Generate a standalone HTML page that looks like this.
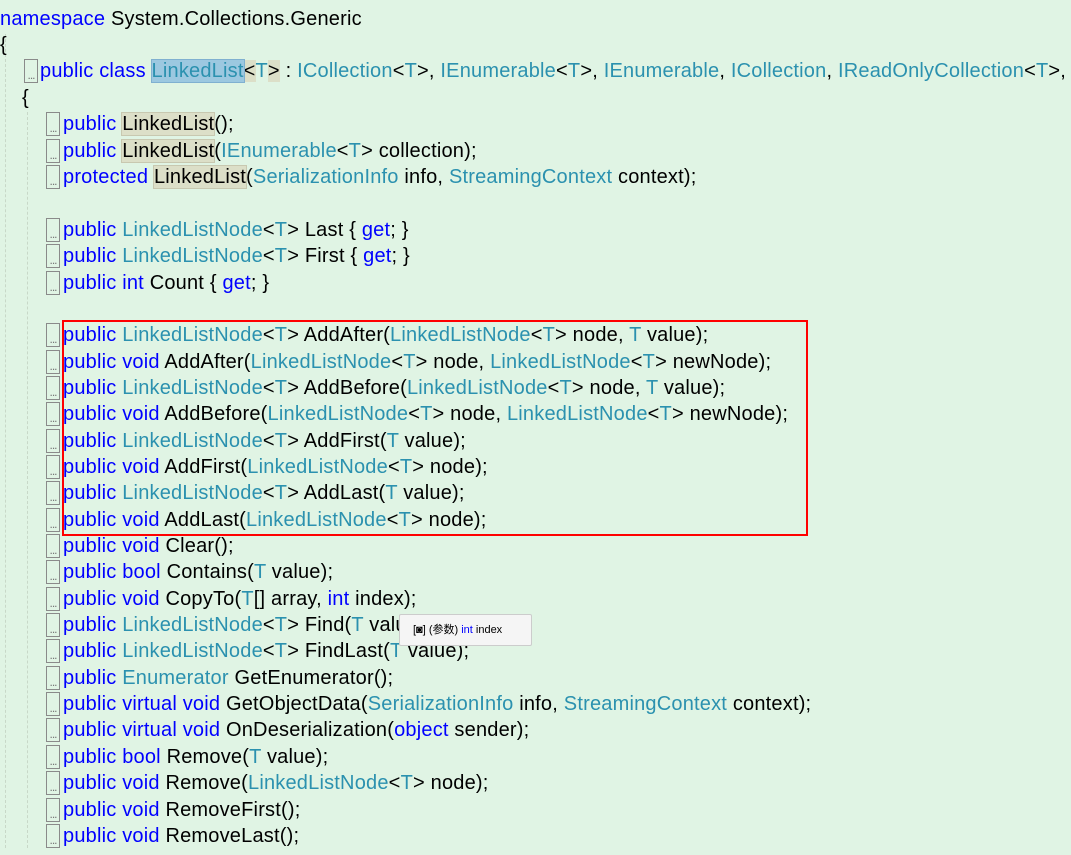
<!DOCTYPE html><html><head><meta charset="utf-8"><style>
body{margin:0;width:1071px;height:848px;background:#e0f4e4;overflow:hidden;position:relative;font-family:"Liberation Sans","Noto Sans CJK SC",sans-serif;font-size:20px;letter-spacing:0.2px;color:#000}
.l{position:absolute;height:26px;line-height:26px;white-space:nowrap}
.k{color:#0000ff}.t{color:#2b91af}
.b{position:absolute;width:14px;height:24px;border:1px solid #8a8a8a;box-sizing:border-box;color:#777;font-size:12px;line-height:30px;text-align:center;letter-spacing:-1px}
.g{position:absolute;border-left:1px dashed #c8d8c8;width:0}
.h{background:#dcdfc8;outline:1px solid #c8c8b0}
</style></head><body>
<div class="g" style="left:5px;top:34px;height:814px"></div>
<div class="g" style="left:27px;top:112px;height:736px"></div>
<div class="l" style="left:0;top:6px"><span class="k">namespace</span> System.Collections.Generic</div>
<div class="l" style="left:0;top:32px">{</div>
<div class="b" style="left:24px;top:59px">...</div>
<div class="l" style="left:40px;top:58px"><span class="k">public class</span> <span class="t" style="background:#9cc8e0;outline:1px solid #80b0d0">LinkedList</span><span style="background:#dcdfc8">&lt;</span><span class="t">T</span><span style="background:#dcdfc8">&gt;</span> : <span class="t">ICollection</span>&lt;<span class="t">T</span>&gt;, <span class="t">IEnumerable</span>&lt;<span class="t">T</span>&gt;, <span class="t">IEnumerable</span>, <span class="t">ICollection</span>, <span class="t">IReadOnlyCollection</span>&lt;<span class="t">T</span>&gt;,</div>
<div class="l" style="left:22px;top:85px">{</div>
<div id="c"></div>
<div style="position:absolute;left:62px;top:320px;width:746px;height:216px;border:2px solid #f00;box-sizing:border-box"></div>
<div style="position:absolute;left:399px;top:614px;width:133px;height:32px;background:#f5f5f5;border:1px solid #ccc;border-radius:2px;box-sizing:border-box;font-size:11px;letter-spacing:0;line-height:30px;padding-left:13px">[◙] (参数) <span class="k">int</span> index</div>
<script>
var L={4:'<span class="k">public</span> <span class="h">LinkedList</span>();',
5:'<span class="k">public</span> <span class="h">LinkedList</span>(<span class="t">IEnumerable</span>&lt;<span class="t">T</span>&gt; collection);',
6:'<span class="k">protected</span> <span class="h">LinkedList</span>(<span class="t">SerializationInfo</span> info, <span class="t">StreamingContext</span> context);'};
var N='<span class="t">LinkedListNode</span>&lt;<span class="t">T</span>&gt;',P='<span class="k">public</span> ',V='<span class="k">public void</span> ',T='<span class="t">T</span>';
L[8]=P+N+' Last { <span class="k">get</span>; }';L[9]=P+N+' First { <span class="k">get</span>; }';L[10]='<span class="k">public int</span> Count { <span class="k">get</span>; }';
L[12]=P+N+' AddAfter('+N+' node, '+T+' value);';L[13]=V+'AddAfter('+N+' node, '+N+' newNode);';
L[14]=P+N+' AddBefore('+N+' node, '+T+' value);';L[15]=V+'AddBefore('+N+' node, '+N+' newNode);';
L[16]=P+N+' AddFirst('+T+' value);';L[17]=V+'AddFirst('+N+' node);';L[18]=P+N+' AddLast('+T+' value);';L[19]=V+'AddLast('+N+' node);';
L[20]=V+'Clear();';L[21]='<span class="k">public bool</span> Contains('+T+' value);';L[22]=V+'CopyTo('+T+'[] array, <span class="k">int</span> index);';
L[23]=P+N+' Find('+T+' value);';L[24]=P+N+' FindLast('+T+' value);';L[25]=P+'<span class="t">Enumerator</span> GetEnumerator();';
L[26]='<span class="k">public virtual void</span> GetObjectData(<span class="t">SerializationInfo</span> info, <span class="t">StreamingContext</span> context);';
L[27]='<span class="k">public virtual void</span> OnDeserialization(<span class="k">object</span> sender);';
L[28]='<span class="k">public bool</span> Remove('+T+' value);';L[29]=V+'Remove('+N+' node);';L[30]=V+'RemoveFirst();';L[31]=V+'RemoveLast();';
var h='';for(var i in L){var y=6+i*26.35;h+='<div class="b" style="left:46px;top:'+(y+1)+'px">...</div><div class="l" style="left:63px;top:'+y+'px">'+L[i]+'</div>';}
document.getElementById('c').innerHTML=h;
</script>
</body></html>
